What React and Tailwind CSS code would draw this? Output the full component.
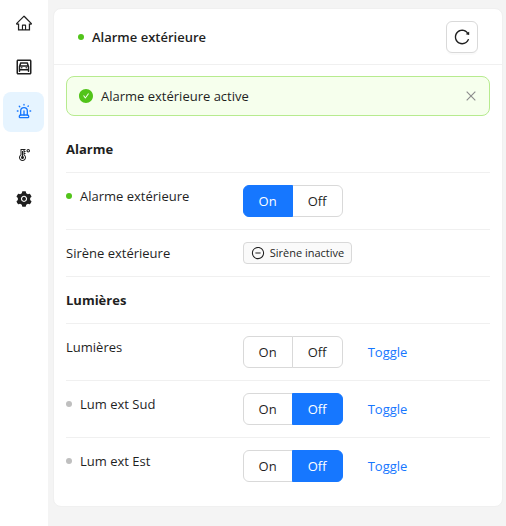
import { useState } from "react";
import {
  AiFillCheckCircle,
  AiFillSetting,
  AiOutlineClose,
  AiOutlineHome,
  AiOutlineMinusCircle,
  AiOutlineReload,
} from "react-icons/ai";
import { MdOutlineGarage } from "react-icons/md";
import { LiaTemperatureHighSolid } from "react-icons/lia";
import { LuSiren } from "react-icons/lu";

const MENU = [
  { label: "Accueil", Icon: AiOutlineHome, size: "size-[18px]" },
  { label: "Garage", Icon: MdOutlineGarage, size: "size-[18px]" },
  { label: "Alarme", Icon: LuSiren, size: "size-4", active: true },
  { label: "Température", Icon: LiaTemperatureHighSolid, size: "size-4" },
  { label: "Réglages", Icon: AiFillSetting, size: "size-[18px]" },
];

function Dot({ on }) {
  return <span className={`mr-2 inline-block size-1.5 shrink-0 rounded-full ${on ? "bg-[#52c41a]" : "bg-[#bfbfbf]"}`} />;
}

function OnOff({ label, initial }) {
  const [value, setValue] = useState(initial);
  const base = "h-8 border text-center";
  const selected = "relative border-[#1677ff] bg-[#1677ff] text-white";
  const plain = "border-[#d9d9d9] bg-white";
  return (
    <div role="group" aria-label={label} className="flex">
      <button type="button" onClick={() => setValue("on")} className={`${base} w-[50px] rounded-l-md ${value === "on" ? selected : plain}`}>
        On
      </button>
      <button type="button" onClick={() => setValue("off")} className={`${base} -ml-px w-[51px] rounded-r-md ${value === "off" ? selected : plain}`}>
        Off
      </button>
    </div>
  );
}

function Row({ label, status, children }) {
  return (
    <li className="grid grid-cols-[5fr_7fr] items-start border-b border-[#f0f0f0] py-3 last:border-b-0">
      <div className="flex items-center">
        {status && <Dot on={status === "on"} />}
        {label}
      </div>
      <div className="flex items-center gap-2">{children}</div>
    </li>
  );
}

function Tag({ Icon, children }) {
  return (
    <span className="flex h-[22px] items-center gap-[5px] rounded border border-[#d9d9d9] bg-[#fafafa] px-[7px] text-[11px]">
      <Icon className="size-[14px]" />
      {children}
    </span>
  );
}

function Section({ title, children }) {
  return (
    <section>
      <h2 className="border-b border-[#f0f0f0] py-3 font-bold">{title}</h2>
      <ul>{children}</ul>
    </section>
  );
}

function Toggle() {
  return (
    <button type="button" className="h-8 rounded-md border border-transparent px-4 text-[#1677ff]">
      Toggle
    </button>
  );
}

export default function App() {
  const [alertOpen, setAlertOpen] = useState(true);
  return (
    <div className="flex min-h-screen bg-[#f4f4f4] font-['Open_Sans','Noto_Sans',sans-serif] text-[13px] leading-[22px] text-[#1f1f1f]">
      <nav className="flex w-12 shrink-0 flex-col gap-1 bg-white py-1 pr-1 pl-[3px]">
        {MENU.map(({ label, Icon, size, active }) => (
          <a
            key={label}
            href="#"
            aria-label={label}
            className={`flex h-10 items-center justify-center rounded-lg pb-0.5 ${active ? "bg-[#e6f4ff] text-[#1677ff]" : ""}`}
          >
            <Icon className={size} />
          </a>
        ))}
      </nav>
      <main className="min-w-0 flex-1 pt-2 pr-[3px] pb-5 pl-[5px]">
        <div className="rounded-lg border border-[#f0f0f0] bg-white">
          <header className="flex h-14 items-center justify-between border-b border-[#f0f0f0] px-6">
            <h1 className="flex items-center font-semibold">
              <Dot on />
              Alarme extérieure
            </h1>
            <button
              type="button"
              aria-label="Actualiser"
              className="flex size-8 items-center justify-center rounded-md border border-[#d9d9d9] bg-white shadow-[0_2px_0_rgba(0,0,0,0.02)]"
            >
              <AiOutlineReload className="size-[18px]" />
            </button>
          </header>
          <div className="px-3 pt-[11px] pb-3">
            {alertOpen && (
              <div role="status" className="mb-[10px] flex h-10 items-center gap-[7px] rounded-lg border border-[#b7eb8f] bg-[#f6ffed] px-[11px]">
                <AiFillCheckCircle className="size-4 shrink-0 text-[#52c41a]" />
                <span className="flex-1">Alarme extérieure active</span>
                <button type="button" aria-label="Fermer" onClick={() => setAlertOpen(false)} className="text-[#8c8c8c]">
                  <AiOutlineClose className="size-[14px]" />
                </button>
              </div>
            )}
            <Section title="Alarme">
              <Row label="Alarme extérieure" status="on">
                <OnOff label="Alarme extérieure" initial="on" />
              </Row>
              <li className="grid grid-cols-[5fr_7fr] border-b border-[#f0f0f0] py-3">
                <div>Sirène extérieure</div>
                <div className="flex">
                  <Tag Icon={AiOutlineMinusCircle}>Sirène inactive</Tag>
                </div>
              </li>
            </Section>
            <Section title="Lumières">
              <Row label="Lumières">
                <OnOff label="Lumières" />
                <Toggle />
              </Row>
              <Row label="Lum ext Sud" status="off">
                <OnOff label="Lum ext Sud" initial="off" />
                <Toggle />
              </Row>
              <Row label="Lum ext Est" status="off">
                <OnOff label="Lum ext Est" initial="off" />
                <Toggle />
              </Row>
            </Section>
          </div>
        </div>
      </main>
    </div>
  );
}
